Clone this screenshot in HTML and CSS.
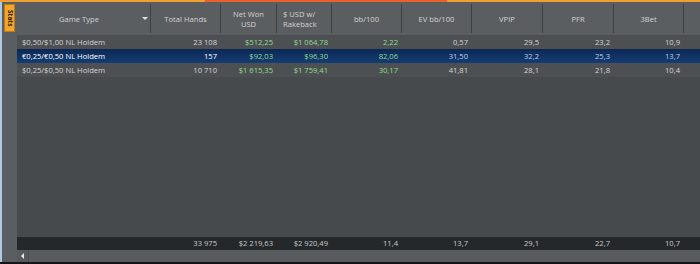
FILE: index.html
```html
<!DOCTYPE html>
<html lang="en">
<head>
    <meta charset="UTF-8">
    <title>Stats</title>
    <link rel="stylesheet" href="styles.css">
</head>
<body>
    <div class="topline">
        <div class="seg-a"></div>
        <div class="seg-b"></div>
        <div class="seg-c"></div>
    </div>
    <div class="window">
        <div class="sidebar">
            <div class="stats-tab"><span>Stats</span></div>
        </div>
        <div class="grid">
            <div class="row head">
                <div class="hcell game">Game Type <span class="arrow"></span></div>
                <div class="hcell">Total Hands</div>
                <div class="hcell">Net Won<br>USD</div>
                <div class="hcell left">$ USD w/<br>Rakeback</div>
                <div class="hcell">bb/100</div>
                <div class="hcell">EV bb/100</div>
                <div class="hcell">VPIP</div>
                <div class="hcell">PFR</div>
                <div class="hcell">3Bet</div>
                <div class="hcell last"></div>
            </div>
            <div class="row data">
                <div class="cell name">$0,50/$1,00 NL Holdem</div>
                <div class="cell">23 108</div>
                <div class="cell green">$512,25</div>
                <div class="cell green">$1 064,78</div>
                <div class="cell green">2,22</div>
                <div class="cell">0,57</div>
                <div class="cell">29,5</div>
                <div class="cell">23,2</div>
                <div class="cell">10,9</div>
                <div class="cell"></div>
            </div>
            <div class="row data selected">
                <div class="cell name">€0,25/€0,50 NL Holdem</div>
                <div class="cell white">157</div>
                <div class="cell green">$92,03</div>
                <div class="cell green">$96,30</div>
                <div class="cell green">82,06</div>
                <div class="cell">31,50</div>
                <div class="cell">32,2</div>
                <div class="cell">25,3</div>
                <div class="cell">13,7</div>
                <div class="cell"></div>
            </div>
            <div class="row data">
                <div class="cell name">$0,25/$0,50 NL Holdem</div>
                <div class="cell">10 710</div>
                <div class="cell green">$1 615,35</div>
                <div class="cell green">$1 759,41</div>
                <div class="cell green">30,17</div>
                <div class="cell">41,81</div>
                <div class="cell">28,1</div>
                <div class="cell">21,8</div>
                <div class="cell">10,4</div>
                <div class="cell"></div>
            </div>
            <div class="empty"></div>
            <div class="row total">
                <div class="cell name"></div>
                <div class="cell">33 975</div>
                <div class="cell">$2 219,63</div>
                <div class="cell">$2 920,49</div>
                <div class="cell">11,4</div>
                <div class="cell">13,7</div>
                <div class="cell">29,1</div>
                <div class="cell">22,7</div>
                <div class="cell">10,7</div>
                <div class="cell"></div>
            </div>
            <div class="scrollbar">
                <div class="scroll-btn"><span class="left-arrow"></span></div>
                <div class="scroll-track"></div>
            </div>
        </div>
    </div>
    <div class="bottomline"></div>
</body>
</html>
```

FILE: styles.css
```css
body {
    margin: 0;
    width: 700px;
    height: 264px;
    overflow: hidden;
    background: #1b1c1e;
    font-family: "Open Sans", "DejaVu Sans", sans-serif;
    font-size: 7.6px;
    color: #d4d4d4;
}

.topline {
    display: flex;
    height: 2px;
}

.seg-a {
    width: 205px;
    background: #f0a030;
}

.seg-b {
    width: 242px;
    background: #e8602a;
}

.seg-c {
    flex: 1;
    background: #f0a030;
}

.window {
    display: flex;
    height: 260px;
}

.sidebar {
    width: 15px;
    background: #5b5e61;
    border-left: 2px solid #b3c8e2;
    padding-top: 2px;
}

.stats-tab {
    width: 11px;
    height: 28px;
    margin-left: 2px;
    background: #f4a62a;
    border: 1px solid #c07818;
    box-sizing: border-box;
    display: flex;
    align-items: center;
    justify-content: center;
}

.stats-tab span {
    writing-mode: vertical-rl;
    font-size: 6.5px;
    color: #2a1a05;
    font-weight: bold;
    line-height: 1;
}

.grid {
    flex: 1;
    display: flex;
    flex-direction: column;
    background: #474a4d;
}

.row {
    display: grid;
    grid-template-columns: 134px 70px 56px 55px 70px 70px 71px 71px 70px 1fr;
}

.head {
    height: 33px;
    background: #5b5e61;
}

.hcell {
    display: flex;
    align-items: center;
    justify-content: center;
    text-align: center;
    line-height: 10px;
    color: #d2d2d2;
    margin: 2px 0;
    border-right: 1px solid #3e4144;
}

.hcell.left {
    justify-content: flex-start;
    text-align: left;
    padding-left: 6px;
}

.hcell.game {
    gap: 43px;
    padding-left: 40px;
}

.hcell.last {
    border-right: none;
}

.arrow {
    width: 0;
    height: 0;
    border-left: 3px solid transparent;
    border-right: 3px solid transparent;
    border-top: 3px solid #e0e0e0;
}

.data {
    height: 14px;
    background: #4d5053;
}

.cell {
    text-align: right;
    padding-right: 4px;
    line-height: 14px;
    white-space: nowrap;
}

.cell.name {
    text-align: left;
    padding-left: 5px;
}

.green {
    color: #92dc8c;
}

.selected {
    background: linear-gradient(#0d2754, #143d74);
    color: #b9d0f0;
}

.selected .name,
.selected .white {
    color: #ffffff;
}

.empty {
    flex: 1;
    background: #474a4d;
}

.total {
    height: 13px;
    background: #25282b;
    color: #c8c8c8;
}

.total .cell {
    line-height: 13px;
}

.scrollbar {
    display: flex;
    height: 12px;
    background: #56595c;
}

.scroll-btn {
    width: 11px;
    display: flex;
    align-items: center;
    justify-content: center;
    border-right: 1px solid #4a4d50;
}

.left-arrow {
    width: 0;
    height: 0;
    border-top: 3px solid transparent;
    border-bottom: 3px solid transparent;
    border-right: 3px solid #e8e8e8;
}

.scroll-track {
    flex: 1;
    background: #595c5f;
}

.bottomline {
    height: 2px;
    background: #141516;
}
```
